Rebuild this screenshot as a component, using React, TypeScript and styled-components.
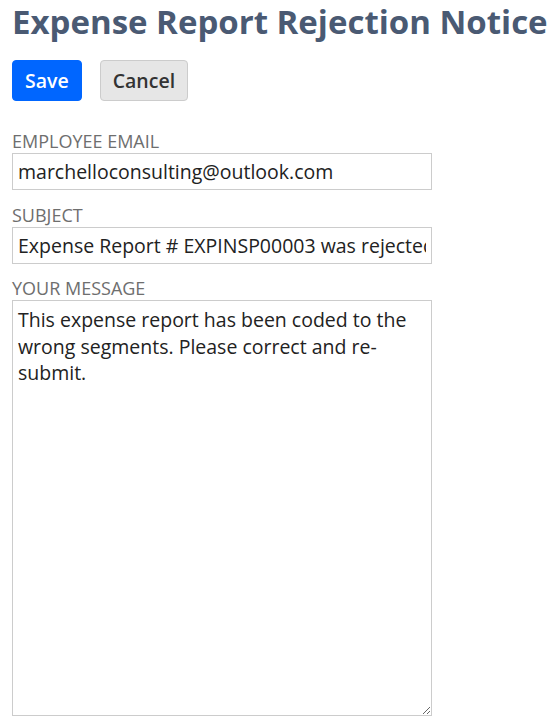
import React from 'react';
import styled, { createGlobalStyle } from 'styled-components';

const GlobalStyle = createGlobalStyle`
  body {
    margin: 0;
    background: #fff;
    font-family: "Open Sans", "Liberation Sans", sans-serif;
  }
`;

const Page = styled.div`
  padding: 0 12px;
  display: flex;
  flex-direction: column;
`;

const Title = styled.h1`
  margin: 0;
  font-size: 33px;
  line-height: 44px;
  font-weight: 700;
  color: #4a5a73;
  white-space: nowrap;
`;

const Toolbar = styled.div`
  display: flex;
  gap: 18px;
  margin-top: 16px;
  margin-bottom: 28px;
`;

const Button = styled.button<{ $primary?: boolean }>`
  height: 41px;
  padding: 0 12px;
  font-family: inherit;
  font-size: 19.5px;
  font-weight: 600;
  border-radius: 4px;
  cursor: pointer;
  color: ${(p) => (p.$primary ? '#fff' : '#333')};
  background: ${(p) => (p.$primary ? '#0066ff' : '#e6e6e6')};
  border: 1px solid ${(p) => (p.$primary ? '#0066ff' : '#cccccc')};
`;

const Form = styled.form`
  display: flex;
  flex-direction: column;
  gap: 12.5px;
`;

const Field = styled.label`
  display: flex;
  flex-direction: column;
  width: 420px;
`;

const Label = styled.span`
  font-size: 18px;
  line-height: 24px;
  color: #6e6e6e;
  text-transform: uppercase;
`;

const Input = styled.input`
  box-sizing: border-box;
  height: 37px;
  padding: 0 5px;
  font-family: inherit;
  font-size: 19.5px;
  color: #222;
  border: 1px solid #ccc;
  outline: none;
`;

const TextArea = styled.textarea`
  box-sizing: border-box;
  height: 416px;
  padding: 6px 5px;
  font-family: inherit;
  font-size: 19.5px;
  line-height: 26.5px;
  color: #222;
  border: 1px solid #ccc;
  outline: none;
  resize: vertical;
`;

const App: React.FC = () => {
  return (
    <Page>
      <GlobalStyle />
      <Title>Expense Report Rejection Notice</Title>
      <Toolbar>
        <Button type="button" $primary>Save</Button>
        <Button type="button">Cancel</Button>
      </Toolbar>
      <Form>
        <Field>
          <Label>Employee Email</Label>
          <Input defaultValue="marchelloconsulting@outlook.com" />
        </Field>
        <Field>
          <Label>Subject</Label>
          <Input defaultValue="Expense Report # EXPINSP00003 was rejected" />
        </Field>
        <Field>
          <Label>Your Message</Label>
          <TextArea defaultValue="This expense report has been coded to the wrong segments. Please correct and re-submit." />
        </Field>
      </Form>
    </Page>
  );
};

export default App;
